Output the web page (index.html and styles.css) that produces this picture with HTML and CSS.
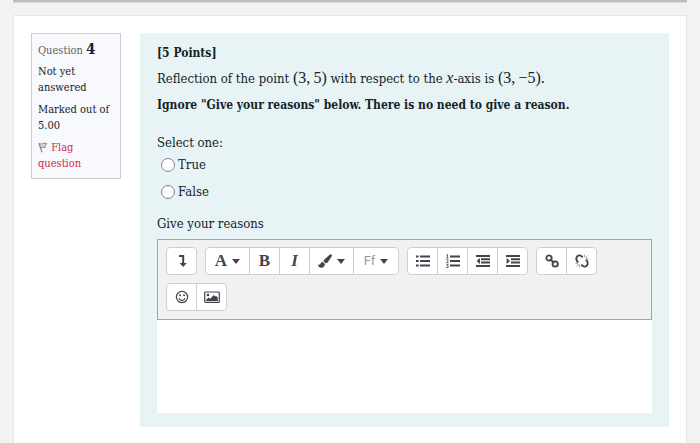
FILE: index.html
```
<!DOCTYPE html>
<html lang="en">
  <head>
    <meta charset="utf-8">
    <title>Quiz - Question 4</title>
    <link rel="stylesheet" href="styles.css">
  </head>
  <body>
    <div class="page">
      <div class="header-edge"></div>
      <main class="card">
        <div class="question">
          <div class="info">
            <h3 class="number">Question <span class="qno">4</span></h3>
            <div class="state">Not yet answered</div>
            <div class="grade">Marked out of 5.00</div>
            <a class="flag" href="#"><svg class="flag-icon" viewBox="0 0 10 11"><path d="M1 1.2L4 10.4" stroke="#888" stroke-width="1.2" fill="none"/><path d="M1.3 1.5Q3.5 2.6 5 1.6T9 1.5L6.8 3.6 7.2 5.4Q5 4.8 2.8 6z" fill="#ddd" stroke="#888"/></svg> Flag question</a>
          </div>
          <div class="formulation">
            <p><b>[5 Points]</b></p>
            <p>Reflection of the point <span class="math">(3,&thinsp;5)</span> with respect to the <i class="math">x</i>-axis is <span class="math">(3,&thinsp;−5).</span></p>
            <p><b>Ignore "Give your reasons" below. There is no need to give a reason.</b></p>
            <fieldset class="answers">
              <legend>Select one:</legend>
              <div class="answer"><input type="radio" name="answer" id="true"><label for="true">True</label></div>
              <div class="answer"><input type="radio" name="answer" id="false"><label for="false">False</label></div>
            </fieldset>
            <label class="reasons" for="reasons">Give your reasons</label>
            <div class="editor">
              <div class="toolbar">
                <div class="group">
                  <button type="button" aria-label="Show more buttons"><svg viewBox="0 0 14 14"><path d="M4 2h4.2v8" fill="none" stroke="currentColor" stroke-width="2"/><path d="M4.6 9h7.2L8.2 13z"/></svg></button>
                </div>
                <div class="group">
                  <button type="button" class="wide" aria-label="Paragraph styles"><span class="letter">A</span><span class="caret"></span></button>
                  <button type="button" aria-label="Bold"><span class="letter">B</span></button>
                  <button type="button" aria-label="Italic"><span class="letter italic">I</span></button>
                  <button type="button" class="wide" aria-label="Font colour"><svg viewBox="0 0 14 14"><path d="M13.5.4c.8.7.3 1.6-.2 2.5L9.8 8.2c-.6.8-1.4 1.1-2.4 1L5.5 7.3c0-.9.5-1.5 1.2-2.1L11.3.9c.7-.6 1.5-1 2.2-.5z"/><path d="M4.8 8l2 2c.1 2.2-1.2 3.8-3.5 3.8C1 13.8.2 12.3 0 10.2c1.8 1 2.2.4 2.6-.7C3 8.5 3.7 8 4.8 8z"/></svg><span class="caret"></span></button>
                  <button type="button" class="wide" aria-label="Font family"><span class="ff">Ff</span><span class="caret"></span></button>
                </div>
                <div class="group">
                  <button type="button" aria-label="Unordered list"><svg viewBox="0 0 14 14"><path d="M0 1.5h2.6v2H0zM0 6h2.6v2H0zM0 10.5h2.6v2H0zM4 1.5h10v2H4zM4 6h10v2H4zM4 10.5h10v2H4z"/></svg></button>
                  <button type="button" aria-label="Ordered list"><svg viewBox="0 0 14 14"><path d="M4 1.5h10v2H4zM4 6h10v2H4zM4 10.5h10v2H4z"/><path d="M.5 1l1-.6V4M.3 4h2.2M.4 5.8h1.7v1.3L.5 8.7h2M.4 10.4h1.8L1 11.8h1.2v1.7H.2" fill="none" stroke="currentColor" stroke-width=".8"/></svg></button>
                  <button type="button" aria-label="Outdent"><svg viewBox="0 0 14 14"><path d="M0 1h14v2H0zM5 4.3h9v2H5zM5 7.6h9v2H5zM0 11h14v2H0zM4 4v6L.6 7z"/></svg></button>
                  <button type="button" aria-label="Indent"><svg viewBox="0 0 14 14"><path d="M0 1h14v2H0zM5 4.3h9v2H5zM5 7.6h9v2H5zM0 11h14v2H0zM.6 4v6L4 7z"/></svg></button>
                </div>
                <div class="group">
                  <button type="button" aria-label="Link"><svg viewBox="0 0 14 14"><g fill="none" stroke="currentColor" stroke-width="1.8"><circle cx="4" cy="4" r="2.7"/><circle cx="10.2" cy="10" r="2.7"/><path d="M4.8 5.2l4.6 3.6"/></g></svg></button>
                  <button type="button" aria-label="Unlink"><svg viewBox="0 0 14 14"><g fill="none" stroke="currentColor"><path d="M3.3 8.2C1 6.7.7 4.1 2.2 2.4s3.7-1.3 5.4.9M10.7 5.8c2.3 1.5 2.6 4.1 1.1 5.8s-3.7 1.3-5.4-.9" stroke-width="1.9"/><path d="M9.3 3.3V.7M10.4 3.9l2.2-2.2M11 4.8h2.6M4.7 10.7v2.6M3.6 10.1l-2.2 2.2M3 9.2H.4" stroke-width=".6"/></g></svg></button>
                </div>
                <div class="group">
                  <button type="button" aria-label="Emoji"><svg viewBox="0 0 14 14"><circle cx="7" cy="7" r="5.6" fill="none" stroke="currentColor" stroke-width="1.2"/><circle cx="5" cy="5.3" r="1"/><circle cx="9" cy="5.3" r="1"/><path d="M3.8 8.3c1.3 2.7 5.1 2.7 6.4 0" fill="none" stroke="currentColor" stroke-width="1.1"/></svg></button>
                  <button type="button" aria-label="Insert image"><svg class="picture" viewBox="0 0 16 14"><rect x=".7" y="2" width="14.6" height="10.4" rx=".8" fill="none" stroke="currentColor" stroke-width="1.2"/><circle cx="4" cy="5" r="1.3"/><path d="M2.2 11V9.4l2.6-2 1.6 1.3L9.6 5l1.6 1.4.8-.6 1.8 2V11z"/></svg></button>
                </div>
              </div>
              <textarea class="text" id="reasons"></textarea>
            </div>
          </div>
        </div>
      </main>
    </div>
  </body>
</html>
```
FILE: styles.css
```
* {
  box-sizing: border-box;
}

body {
  margin: 0;
  background: #f2f2f2;
  color: #142328;
  font-family: "Roboto Slab", "DejaVu Serif Condensed", "DejaVu Serif", serif;
  font-size: 13px;
  line-height: 18px;
}

.page {
  display: flex;
  flex-direction: column;
  gap: 13px;
  min-height: 100vh;
  padding: 0 13px;
}

.header-edge {
  height: 2px;
  background: #bdbbbd;
  box-shadow: 0 1px 1px #ddd;
}

.card {
  flex: 1;
  padding: 17px;
  padding-bottom: 16px;
  background: #fff;
  border: 1px solid #e6e6e6;
  border-bottom: 0;
}

.question {
  display: flex;
  align-items: flex-start;
  gap: 19px;
}

.info {
  width: 90px;
  padding: 7px 6px 6px;
  border: 1px solid #cacdd6;
  background: #f8f9fc;
  font-size: 11px;
  line-height: 16px;
}

.number {
  margin: 0 0 5px;
  color: #5c6266;
  font-size: 11px;
  font-weight: normal;
  line-height: 17px;
}

.qno {
  color: #142328;
  font-size: 15px;
  font-weight: bold;
}

.state,
.grade {
  margin-bottom: 6px;
}

.flag {
  display: block;
  color: #cb2a4c;
  text-decoration: none;
}

.flag-icon {
  width: 10px;
  height: 11px;
  vertical-align: -2px;
}

.formulation {
  flex: 1;
  min-width: 0;
  padding: 11px 17px 14px;
  background: #e7f3f5;
}

p {
  margin: 0 0 8px;
}

p b {
  font-size: 12px;
}

.math {
  font-family: "Liberation Serif", serif;
  font-size: 16px;
  line-height: 16px;
}

.answers {
  margin: 20px 0 5px;
  padding: 0;
  border: 0;
}

legend {
  padding: 0;
  margin-bottom: 4px;
}

.answer {
  display: flex;
  align-items: center;
  gap: 3px;
  margin: 0 0 9px 4px;
}

.answer input {
  appearance: none;
  width: 14px;
  height: 14px;
  margin: 0;
  border: 1px solid #858585;
  border-radius: 50%;
  background: #fff;
}

.reasons {
  display: block;
  margin-bottom: 6px;
}

.toolbar {
  display: flex;
  flex-wrap: wrap;
  gap: 8px;
  padding: 8px;
  padding-top: 7px;
  border: 1px solid #9aa5ab;
  background: #f1f1f1;
}

.group {
  display: flex;
  border: 1px solid #cfcfcf;
  border-radius: 4px;
  background: #fff;
}

.group button {
  display: flex;
  align-items: center;
  justify-content: center;
  gap: 5px;
  width: 30px;
  height: 26px;
  padding: 0;
  border: 0;
  border-right: 1px solid #cfcfcf;
  background: none;
  color: #42454c;
}

.group button:last-child {
  width: 29px;
  border-right: 0;
}

.group .wide,
.group .wide:last-child {
  width: 44px;
}

.group svg {
  width: 14px;
  height: 14px;
  fill: currentColor;
}

.group .picture {
  width: 16px;
}

.letter {
  font: bold 17px/20px "Liberation Serif", serif;
}

.italic {
  font-style: italic;
}

.ff {
  color: #999;
  font: 13px/20px Roboto, sans-serif;
}

.caret {
  border: 4px solid transparent;
  border-top: 5px solid #42454c;
  border-bottom: 0;
}

.text {
  display: block;
  width: 100%;
  height: 93px;
  padding: 8px;
  border: 0;
  background: #fff;
  resize: none;
}
```
